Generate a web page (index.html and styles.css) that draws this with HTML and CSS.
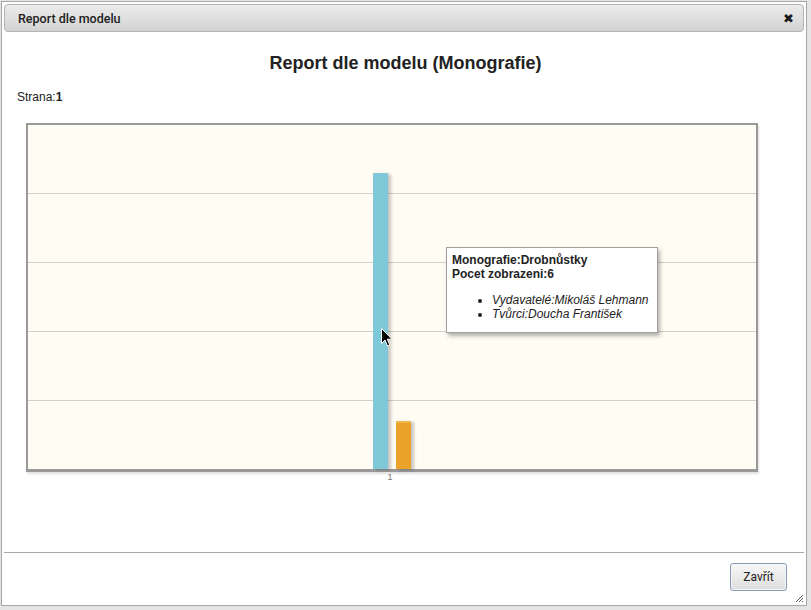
FILE: index.html
```html
<!DOCTYPE html>
<html lang="cs">
<head>
<meta charset="utf-8">
<title>Report dle modelu</title>
<link rel="stylesheet" href="styles.css">
</head>
<body>
<div class="dialog">
  <div class="titlebar">
    <span class="title">Report dle modelu</span>
    <span class="close">✖</span>
  </div>
  <div class="content">
    <h1 class="heading">Report dle modelu (Monografie)</h1>
    <div class="page">Strana:<b>1</b></div>
    <div class="chart">
      <div class="grid">
        <div class="row"></div>
        <div class="row line"></div>
        <div class="row line"></div>
        <div class="row line"></div>
        <div class="row line"></div>
      </div>
      <div class="bars">
        <div class="bar blue" style="height:296px"></div>
        <div class="bar orange" style="height:48px"></div>
      </div>
      <svg class="cursor" width="12" height="19" viewBox="0 0 12 19">
        <path d="M0.5 0.5 L0.5 15.5 L4 12 L6.5 18 L8.8 17 L6.3 11.2 L11 11.2 Z" fill="#000" stroke="#fff" stroke-width="1"/>
      </svg>
      <div class="tooltip">
        <div><b>Monografie:Drobnůstky</b></div>
        <div><b>Pocet zobrazeni:6</b></div>
        <ul>
          <li><i>Vydavatelé:Mikoláš Lehmann</i></li>
          <li><i>Tvůrci:Doucha František</i></li>
        </ul>
      </div>
    </div>
    <div class="axis"><span>1</span></div>
  </div>
  <div class="footer">
    <button class="btn">Zavřít</button>
  </div>
  <svg class="grip" width="9" height="9" viewBox="0 0 9 9">
    <path d="M8 1 L1 8 M8 4 L4 8 M8 7 L7 8" stroke="#555" stroke-width="1"/>
  </svg>
</div>
</body>
</html>
```

FILE: styles.css
```css
html, body {
  margin: 0;
  padding: 0;
}
body {
  background: #e4e4e4;
  width: 811px;
  height: 610px;
  overflow: hidden;
  font-family: "Liberation Sans", Arial, sans-serif;
  color: #222;
}
.dialog {
  position: relative;
  box-sizing: border-box;
  margin: 1px 0 0 1px;
  width: 806px;
  height: 605px;
  border: 1px solid #a8a8a8;
  background: #fff;
  padding: 2px;
  display: flex;
  flex-direction: column;
}
.titlebar {
  box-sizing: border-box;
  height: 28px;
  border: 1px solid #b3b3b3;
  border-radius: 4px;
  background: linear-gradient(#ebebeb, #d3d3d3);
  display: flex;
  align-items: center;
  justify-content: space-between;
  padding: 0 9px 0 13px;
}
.title {
  font-family: Roboto, "Liberation Sans", sans-serif;
  font-weight: 500;
  font-size: 12.5px;
  color: #222;
}
.close {
  font-family: "DejaVu Sans", sans-serif;
  font-size: 13px;
  color: #1a1a1a;
}
.content {
  flex: 1;
  padding: 21px 0 0 0;
}
.heading {
  margin: 0;
  text-align: center;
  font-size: 18px;
  line-height: 20px;
  font-weight: bold;
  color: #222;
  padding-left: 3px;
}
.page {
  margin: 17px 0 0 13px;
  font-size: 12px;
  line-height: 14px;
}
.chart {
  position: relative;
  box-sizing: border-box;
  margin: 19px 0 0 22px;
  width: 732px;
  height: 349px;
  border: 2px solid #999;
  border-bottom-width: 3px;
  background: #fffcf4;
  box-shadow: 1px 2px 2px rgba(0, 0, 0, 0.12);
}
.grid {
  height: 100%;
  display: flex;
  flex-direction: column;
}
.row {
  flex: 1;
}
.row.line {
  border-top: 1px solid #cfcfcf;
}
.bars {
  position: absolute;
  left: 0;
  right: 0;
  bottom: 0;
  top: 0;
  display: flex;
  align-items: flex-end;
  justify-content: center;
  gap: 8px;
}
.bar {
  width: 15px;
  box-shadow: 3px 1px 3px rgba(0, 0, 0, 0.22);
}
.bar.blue {
  background: #7fc8d7;
}
.bar.orange {
  background: #eaa228;
  box-sizing: border-box;
  border-top: 2px solid #f0b54d;
}
.cursor {
  position: absolute;
  left: 353px;
  top: 203px;
}
.tooltip {
  position: absolute;
  left: 418px;
  top: 122px;
  box-sizing: border-box;
  width: 212px;
  height: 86px;
  background: #fff;
  border: 1px solid #a0a0a0;
  box-shadow: 2px 3px 4px rgba(0, 0, 0, 0.3);
  padding: 5px 5px 0 5px;
  font-size: 12px;
  line-height: 14px;
  color: #222;
}
.tooltip ul {
  margin: 12px 0 0 0;
  padding-left: 40px;
}
.axis {
  width: 732px;
  margin-left: 22px;
  text-align: center;
  font-size: 9px;
  line-height: 10px;
  color: #777;
  padding-right: 4px;
  box-sizing: border-box;
}
.footer {
  height: 50px;
  border-top: 1px solid #a8a8a8;
  display: flex;
  justify-content: flex-end;
  align-items: flex-start;
  padding-right: 17px;
}
.btn {
  margin-top: 10px;
  width: 57px;
  height: 28px;
  border: 1px solid #8799b2;
  border-radius: 3px;
  background: linear-gradient(#f8f8f8, #dddddd);
  box-shadow: inset 0 0 0 1px #f4f6f9;
  font-family: Roboto, "Liberation Sans", sans-serif;
  font-size: 12px;
  color: #222;
  padding: 0;
}
.grip {
  position: absolute;
  right: 2px;
  bottom: 2px;
}
```
